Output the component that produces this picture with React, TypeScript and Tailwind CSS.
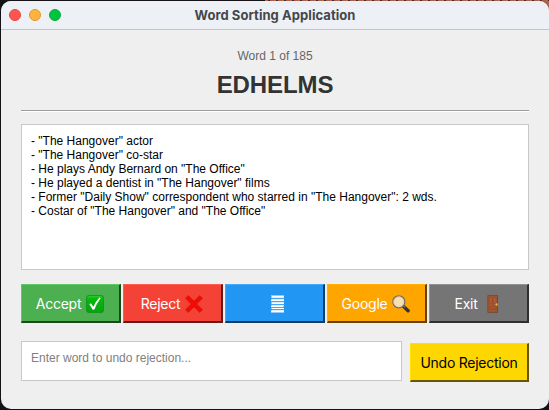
import type { ReactNode } from 'react';

const clues = [
  '- "The Hangover" actor',
  '- "The Hangover" co-star',
  '- He plays Andy Bernard on "The Office"',
  '- He played a dentist in "The Hangover" films',
  '- Former "Daily Show" correspondent who starred in "The Hangover": 2 wds.',
  '- Costar of "The Hangover" and "The Office"',
];

function CheckIcon() {
  return (
    <svg width="18" height="18" viewBox="0 0 18 18">
      <defs>
        <linearGradient id="check" x1="0" y1="0" x2="0" y2="1">
          <stop offset="0" stopColor="#2fd02f" />
          <stop offset="0.2" stopColor="#07b80d" />
          <stop offset="1" stopColor="#04a50c" />
        </linearGradient>
      </defs>
      <rect x="0.4" y="0.4" width="17.2" height="17.2" rx="2.8" fill="url(#check)" stroke="#0b8f18" strokeWidth="0.8" />
      <path d="M3.4 9.2 L5 8.3 L7.4 11.8 Q9.6 6.5 13.4 2.6 L14.7 3.2 Q10.6 8.4 8.4 14.6 L6.7 14.8 Z" fill="#fff" />
    </svg>
  );
}

function CrossIcon() {
  return (
    <svg width="18" height="18" viewBox="0 0 18 18">
      <path
        d="M3.3 0.5 L9 6.2 L14.7 0.5 L17.5 3.3 L11.7 9 L17.5 14.7 L14.7 17.5 L9 11.8 L3.3 17.5 L0.5 14.7 L6.3 9 L0.5 3.3 Z"
        fill="#f30b05"
        stroke="#c9120c"
        strokeWidth="0.6"
      />
    </svg>
  );
}

function PageIcon() {
  return (
    <svg width="13" height="18" viewBox="0 0 13 18" shapeRendering="crispEdges">
      <rect width="13" height="18" fill="#93caf9" />
      <path d="M1 1.5H13M0 5.5H13M1 8.5H13M0 11.5H12M1 13.5H13M0 16.5H13" stroke="#fff" />
      <path d="M1 2.5H13M1 4.5H13M1 7.5H13M1 10.5H13M1 15.5H13" stroke="#d8edfd" />
      <path d="M0 3.5H13M0 6.5H13M0 9.5H13M0 12.5H13M0 14.5H13" stroke="#45a6f5" />
    </svg>
  );
}

function MagnifierIcon() {
  return (
    <svg width="18" height="18" viewBox="0 0 18 18">
      <path d="M10.7 10.6 L16.1 15.8" stroke="#303638" strokeWidth="3.4" strokeLinecap="round" />
      <path d="M11 10.6 L13 12.4" stroke="#6e7476" strokeWidth="1.4" />
      <circle cx="6.8" cy="6.8" r="6" fill="#f8dfb2" stroke="#706f67" strokeWidth="1.3" />
      <circle cx="6.8" cy="6.8" r="5" fill="none" stroke="#d9cfae" strokeWidth="0.7" />
    </svg>
  );
}

function DoorIcon() {
  return (
    <svg width="12" height="18" viewBox="0 0 12 18">
      <rect x="0.5" y="0.3" width="10.5" height="17.4" fill="#7a3c22" />
      <rect x="1.2" y="1" width="9.1" height="16" fill="#a4552f" />
      <path d="M2.4 2.3H5V8.3H2.4ZM6.2 2.3H9V8.3H6.2ZM2.4 11.6H9V13H2.4ZM2.4 14.5H9V16H2.4Z" fill="#aa6039" stroke="#88452a" strokeWidth="0.5" />
      <circle cx="9.6" cy="9.5" r="1.2" fill="#e5b32b" />
    </svg>
  );
}

function ActionButton({ tone, children }: { tone: string; children?: ReactNode }) {
  return (
    <button
      className={`flex h-[39px] w-[100px] shrink-0 items-center justify-center border-t border-r-2 border-b-2 border-l pt-px font-[Inter,sans-serif] text-[14px] leading-none tracking-[-0.25px] whitespace-nowrap text-white ${tone}`}
    >
      {children}
    </button>
  );
}

export default function App() {
  return (
    <div className="h-[410px] w-[549px] overflow-hidden bg-[#141216] font-['Liberation_Sans',Arial,sans-serif]">
      <div className="flex h-px justify-end">
        <div className="h-px w-[284px] bg-[repeating-linear-gradient(90deg,#b66451_0_3px,#462b2b_3px_5px,#a25e4d_5px_8px)]" />
      </div>
      <div className="flex h-[408px] justify-end bg-[linear-gradient(90deg,#141216_0_540px,#a66452_540px)] bg-[length:549px_20px] bg-no-repeat">
        <main className="h-[408px] w-[548px] overflow-hidden rounded-[10px] bg-[#efefef]">
          <header className="flex h-[29px] items-center border-b border-[#c3c4c5] bg-[#edf1f6] pl-2">
            <div className="flex w-[120px] gap-2">
              <span className="size-3 rounded-full border border-[#e8443f] bg-[#ff5550]" />
              <span className="size-3 rounded-full border border-[#df9730] bg-[#ffb33c]" />
              <span className="size-3 rounded-full border border-[#07ae33] bg-[#00c33e]" />
            </div>
            <h1 className="w-[292px] text-center font-[Inter,sans-serif] text-[13px] leading-4 font-bold tracking-[0.06px] text-[#46474a]">
              Word Sorting Application
            </h1>
          </header>
          <div className="pr-5 pl-5">
            <p className="pt-[19px] text-center text-[12px] leading-[14px] text-[#666]">Word 1 of 185</p>
            <h2 className="pt-[8px] text-center text-[24px] leading-[27px] font-bold tracking-[-0.1px] text-[#333]">EDHELMS</h2>
            <hr className="mt-[12px] h-[2px] border-t border-b border-t-[#9c9c9c] border-b-white" />
            <section className="mt-[12px] h-[146px] border border-[#c8c8c8] bg-white px-[9px] pt-[9px] text-[12px] leading-[14px] text-black">
              {clues.map((clue) => (
                <p key={clue} className="whitespace-nowrap">
                  {clue}
                </p>
              ))}
            </section>
            <div className="mt-[14px] flex gap-[2px]">
              <ActionButton tone="bg-[#4caf50] border-t-[#61c765] border-l-[#61c765] border-r-[#1e4620] border-b-[#1e4620] pr-px">
                <span className="mr-[5px]">Accept</span>
                <CheckIcon />
              </ActionButton>
              <ActionButton tone="bg-[#f44336] border-t-[#ff5b4f] border-l-[#ff5b4f] border-r-[#621b16] border-b-[#621b16] pr-px">
                <span className="mr-[5px]">Reject</span>
                <CrossIcon />
              </ActionButton>
              <ActionButton tone="bg-[#2196f3] border-t-[#46a9f8] border-l-[#46a9f8] border-r-[#0d3c61] border-b-[#0d3c61] pl-[6px]">
                <PageIcon />
              </ActionButton>
              <ActionButton tone="bg-[#ffa500] border-t-[#ffb000] border-l-[#ffb000] border-r-[#664200] border-b-[#664200] pr-px">
                <span className="mr-[5px]">Google</span>
                <MagnifierIcon />
              </ActionButton>
              <ActionButton tone="bg-[#757575] border-t-[#929292] border-l-[#929292] border-r-[#2f2f2f] border-b-[#2f2f2f] pr-[4px]">
                <span className="mr-[9px]">Exit</span>
                <DoorIcon />
              </ActionButton>
            </div>
            <div className="mt-[18px] flex items-start gap-2">
              <input
                className="h-[40px] w-[381px] border border-[#c8c8c8] bg-white px-[9px] pb-[7px] text-[12px] text-black placeholder:text-[#808080]"
                placeholder="Enter word to undo rejection..."
              />
              <button className="mt-[2px] h-[39px] w-[119px] border-t border-r-2 border-b-2 border-l border-t-[#ffe000] border-r-[#665600] border-b-[#665600] border-l-[#ffe000] bg-[#ffd700] font-[Inter,sans-serif] text-[14px] tracking-[-0.25px] whitespace-nowrap text-black">
                Undo Rejection
              </button>
            </div>
          </div>
        </main>
      </div>
    </div>
  );
}
